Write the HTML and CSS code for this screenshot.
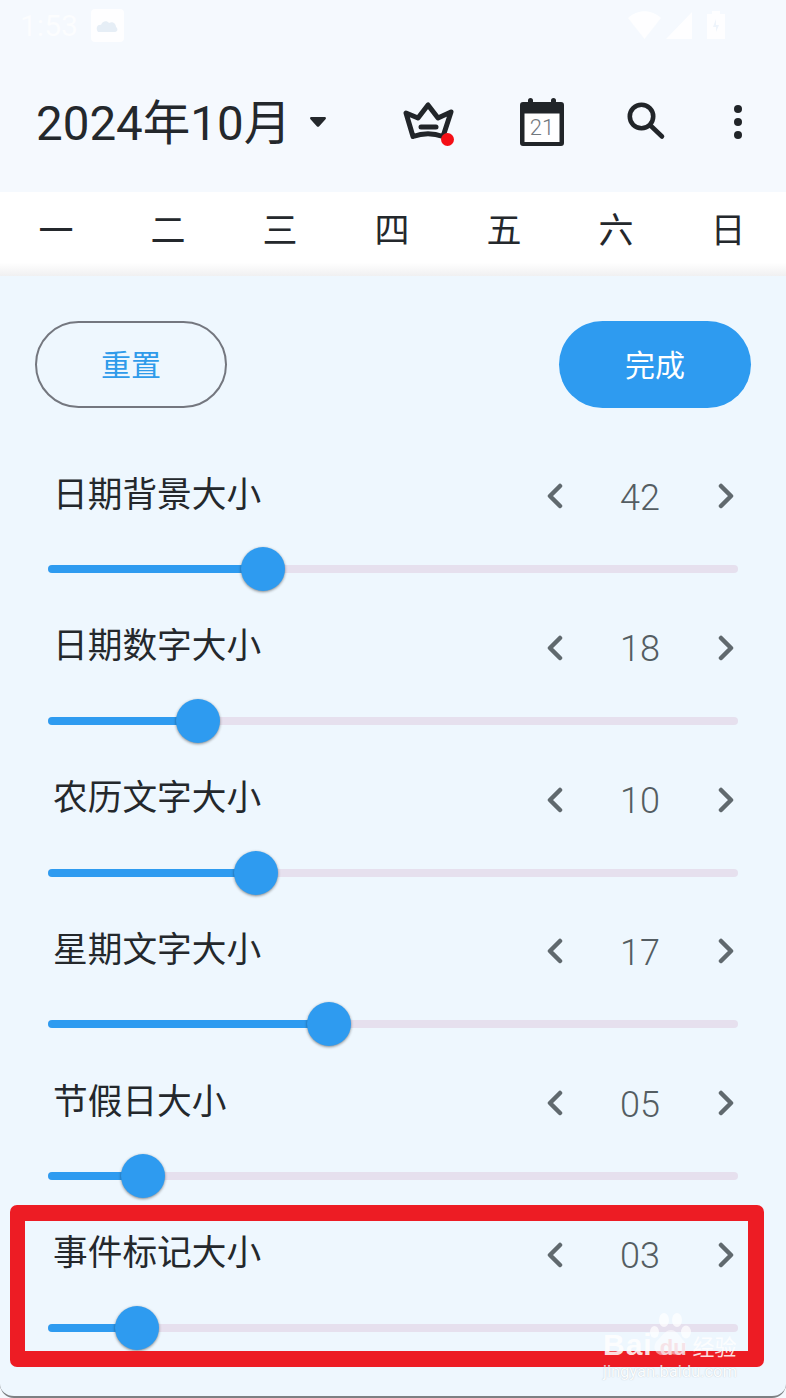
FILE: index.html
```html
<!DOCTYPE html>
<html>
  <head>
    <meta charset="UTF-8" />
    <title>日历设置</title>
    <link rel="stylesheet" href="styles.css">
  </head>
  <body>
    <div class="page">
      <div class="status-bar">
        <span class="status-time">1:53</span>
        <svg class="status-app" width="33" height="33" viewBox="0 0 33 33">
          <rect width="33" height="33" rx="4" fill="#fff" fill-opacity="0.85" />
          <path d="M7 23c-3-4 0-8 3-7 1-4 6-5 8-2 4-2 7 1 7 4 2 1 2 5-1 5z" fill="#e6eef6" />
        </svg>
        <span class="status-right">
          <svg width="33" height="28" viewBox="0 0 33 28"><path d="M0 7C9-2 24-2 33 7L16.5 28z" fill="#fff" fill-opacity="0.85" /></svg>
          <svg width="26" height="27" viewBox="0 0 26 27"><path d="M26 0V27H0z" fill="#fff" fill-opacity="0.85" /></svg>
          <svg width="18" height="28" viewBox="0 0 18 28"><path d="M5 3V0h8v3h5v25H0V3z" fill="#fff" fill-opacity="0.85" /><path d="M9 8v6h3l-3 7v-5H6z" fill="#eef4fb" /></svg>
        </span>
      </div>

      <header class="top-bar">
        <h1 class="month-title">2024年10月</h1>
        <svg class="caret" width="16" height="10" viewBox="0 0 16 10"><path d="M1.500 0h13c1.300 0 1.900 1.300 1 2.200L9.200 9.200c-.7.800-1.700.8-2.400 0L.5 2.200C-.4 1.300.2 0 1.500 0z" fill="#24282c" /></svg>
        <svg class="icon icon-crown" width="56" height="52" viewBox="0 0 56 52" fill="none" stroke="#212529" stroke-width="5" stroke-linecap="round" stroke-linejoin="round">
          <path d="M6 17 13 40.500Q28 35 43 40.500L51 16 38 22 28 9 18 22z" />
          <path d="M21 31H36" />
          <circle cx="47.500" cy="43.500" r="6.500" fill="#f40f16" stroke="none" />
        </svg>
        <span class="icon icon-calendar">
          <svg width="44" height="52" viewBox="0 0 44 52">
            <rect x="4" y="17" width="36" height="30" fill="#fff" />
            <path d="M3 6h5V4.500a2.500 2.500 0 0 1 5 0V6h18V4.500a2.500 2.500 0 0 1 5 0V6h5a3 3 0 0 1 3 3v38a3 3 0 0 1-3 3H3a3 3 0 0 1-3-3V9a3 3 0 0 1 3-3zM4.500 17.500V46H39.500V17.500z" fill="#212529" fill-rule="evenodd" />
          </svg>
          <span class="calendar-day">21</span>
        </span>
        <svg class="icon icon-search" width="42" height="52" viewBox="0 0 42 52" fill="none" stroke="#212529" stroke-width="4.600" stroke-linecap="round">
          <circle cx="17.500" cy="20.500" r="11.700" />
          <path d="M26.500 29.500 38 40.500" />
        </svg>
        <svg class="icon icon-more" width="16" height="52" viewBox="0 0 16 52" fill="#212529">
          <circle cx="8" cy="13" r="4" />
          <circle cx="8" cy="26" r="4" />
          <circle cx="8" cy="39" r="4" />
        </svg>
      </header>

      <div class="week-row">
        <span>一</span><span>二</span><span>三</span><span>四</span><span>五</span><span>六</span><span>日</span>
      </div>

      <main class="panel">
        <div class="actions">
          <button class="btn btn-reset">重置</button>
          <button class="btn btn-done">完成</button>
        </div>

        <div class="setting">
          <div class="setting-head">
            <span class="setting-name">日期背景大小</span>
            <svg class="arrow arrow-prev" width="16" height="26" viewBox="0 0 16 26"><path d="M13 3 3 13 13 23" /></svg>
            <span class="setting-value">42</span>
            <svg class="arrow arrow-next" width="16" height="26" viewBox="0 0 16 26"><path d="M3 3 13 13 3 23" /></svg>
          </div>
          <div class="slider"><div class="slider-fill" style="width: 215px"><span class="slider-thumb"></span></div></div>
        </div>

        <div class="setting">
          <div class="setting-head">
            <span class="setting-name">日期数字大小</span>
            <svg class="arrow arrow-prev" width="16" height="26" viewBox="0 0 16 26"><path d="M13 3 3 13 13 23" /></svg>
            <span class="setting-value">18</span>
            <svg class="arrow arrow-next" width="16" height="26" viewBox="0 0 16 26"><path d="M3 3 13 13 3 23" /></svg>
          </div>
          <div class="slider"><div class="slider-fill" style="width: 150px"><span class="slider-thumb"></span></div></div>
        </div>

        <div class="setting">
          <div class="setting-head">
            <span class="setting-name">农历文字大小</span>
            <svg class="arrow arrow-prev" width="16" height="26" viewBox="0 0 16 26"><path d="M13 3 3 13 13 23" /></svg>
            <span class="setting-value">10</span>
            <svg class="arrow arrow-next" width="16" height="26" viewBox="0 0 16 26"><path d="M3 3 13 13 3 23" /></svg>
          </div>
          <div class="slider"><div class="slider-fill" style="width: 208px"><span class="slider-thumb"></span></div></div>
        </div>

        <div class="setting">
          <div class="setting-head">
            <span class="setting-name">星期文字大小</span>
            <svg class="arrow arrow-prev" width="16" height="26" viewBox="0 0 16 26"><path d="M13 3 3 13 13 23" /></svg>
            <span class="setting-value">17</span>
            <svg class="arrow arrow-next" width="16" height="26" viewBox="0 0 16 26"><path d="M3 3 13 13 3 23" /></svg>
          </div>
          <div class="slider"><div class="slider-fill" style="width: 281px"><span class="slider-thumb"></span></div></div>
        </div>

        <div class="setting">
          <div class="setting-head">
            <span class="setting-name">节假日大小</span>
            <svg class="arrow arrow-prev" width="16" height="26" viewBox="0 0 16 26"><path d="M13 3 3 13 13 23" /></svg>
            <span class="setting-value">05</span>
            <svg class="arrow arrow-next" width="16" height="26" viewBox="0 0 16 26"><path d="M3 3 13 13 3 23" /></svg>
          </div>
          <div class="slider"><div class="slider-fill" style="width: 95px"><span class="slider-thumb"></span></div></div>
        </div>

        <div class="setting">
          <div class="setting-head">
            <span class="setting-name">事件标记大小</span>
            <svg class="arrow arrow-prev" width="16" height="26" viewBox="0 0 16 26"><path d="M13 3 3 13 13 23" /></svg>
            <span class="setting-value">03</span>
            <svg class="arrow arrow-next" width="16" height="26" viewBox="0 0 16 26"><path d="M3 3 13 13 3 23" /></svg>
          </div>
          <div class="slider"><div class="slider-fill" style="width: 89px"><span class="slider-thumb"></span></div></div>
        </div>
      </main>

      <!-- annotation drawn over the screenshot -->
      <div class="highlight"></div>

      <div class="watermark">
        <svg class="watermark-paw" width="42" height="43" viewBox="0 0 42 43" fill="#fff">
          <ellipse cx="4.500" cy="19" rx="4.500" ry="6" fill-opacity="0.7" />
          <ellipse cx="14" cy="7" rx="5" ry="7" fill-opacity="0.7" />
          <ellipse cx="27" cy="7" rx="5" ry="7" fill-opacity="0.7" />
          <ellipse cx="36" cy="19" rx="5" ry="6.500" fill-opacity="0.7" />
          <path d="M21 17c6 0 9 7 13 11 5 6 1 14-6 14-3 0-5-1-8-1s-5 1-8 1c-6 0-10-7-6-13 4-4 9-12 15-12z" fill-opacity="0.5" />
        </svg>
        <div class="watermark-logo"><span class="watermark-bai">Bai</span><span class="watermark-du">du</span><span class="watermark-cn">经验</span></div>
        <div class="watermark-url">jingyan.baidu.com</div>
      </div>
    </div>
  </body>
</html>
```

FILE: styles.css
```css
* {
  box-sizing: border-box;
}
body {
  margin: 0;
  font-family: Roboto, "Noto Sans CJK SC", sans-serif;
  color: #24282c;
}
.page {
  position: relative;
  width: 786px;
  height: 1398px;
  overflow: hidden;
  background: #f5f9fe;
}

/* status bar */
.status-bar {
  display: flex;
  align-items: center;
  height: 52px;
  padding: 0 61px 2px 20px;
}
.status-time {
  font-size: 30px;
  color: #fff;
  opacity: 0.7;
}
.status-app {
  margin-left: 13px;
}
.status-right {
  display: flex;
  align-items: center;
  gap: 5px;
  margin-left: auto;
}
.status-right svg:last-child {
  margin-left: 10px;
}

/* top bar */
.top-bar {
  display: flex;
  align-items: center;
  height: 140px;
  padding: 0 40px 0 36px;
}
.month-title {
  margin: 6px 0 0 0;
  font-size: 47.500px;
  font-weight: 400;
  line-height: 1;
}
.caret {
  margin-left: 19px;
}
.icon-crown {
  margin-left: auto;
}
.icon-calendar {
  position: relative;
  display: block;
  width: 44px;
  height: 52px;
  margin-left: 64px;
}
.icon-calendar svg {
  display: block;
}
.calendar-day {
  position: absolute;
  left: 0;
  right: 0;
  top: 19px;
  font-size: 22px;
  font-weight: 300;
  line-height: 26px;
  text-align: center;
  color: #72787e;
}
.icon-search {
  margin-left: 60px;
}
.icon-more {
  margin-left: 64px;
}

/* weekdays */
.week-row {
  display: grid;
  grid-template-columns: repeat(7, 112px);
  height: 84px;
  padding-bottom: 14px;
  align-items: center;
  background: linear-gradient(#fff 84%, #f0f0f1 100%);
  font-size: 35px;
  text-align: center;
}

/* settings panel */
.panel {
  height: 1122px;
  padding-top: 45px;
  background: #eef7fe;
  border-bottom: 2px solid #7d8083;
  border-radius: 0 0 14px 14px;
}
.actions {
  display: flex;
  justify-content: space-between;
  padding: 0 35px;
  margin-bottom: 63px;
}
.btn {
  width: 192px;
  height: 87px;
  border-radius: 44px;
  font-family: inherit;
  font-size: 30px;
  padding: 0 0 4px 0;
}
.btn-reset {
  background: transparent;
  border: 2px solid #74777f;
  color: #2f9bea;
}
.btn-done {
  background: #2e9bf0;
  border: none;
  color: #fff;
}
.setting {
  height: 151.800px;
  padding: 0 48px;
}
.setting-head {
  display: flex;
  align-items: center;
  height: 48px;
  padding-left: 5px;
}
.setting-name {
  margin-bottom: 7px;
  font-size: 34.700px;
  color: #24282c;
}
.setting-value {
  width: 76px;
  margin-top: 5px;
  font-size: 36px;
  font-weight: 300;
  text-align: center;
  color: #545d62;
}
.arrow {
  margin-top: 2px;
  fill: none;
  stroke: #60696e;
  stroke-width: 4.500;
  stroke-linecap: round;
  stroke-linejoin: round;
}
.arrow-prev {
  margin-left: auto;
  margin-right: 39px;
}
.arrow-next {
  margin-left: 40px;
  margin-right: 4px;
}
.slider {
  position: relative;
  height: 8px;
  margin-top: 46px;
  border-radius: 4px;
  background: #e6e0ee;
}
.slider-fill {
  position: relative;
  height: 8px;
  border-radius: 4px;
  background: #2e9bf0;
}
.slider-thumb {
  position: absolute;
  right: -22px;
  top: -18px;
  width: 44px;
  height: 44px;
  border-radius: 50%;
  background: #2e9bf0;
  box-shadow: 0 1px 3px rgba(0, 0, 0, 0.45);
}

/* red box and watermark on top of the screenshot */
.highlight {
  position: absolute;
  left: 10px;
  top: 1205px;
  width: 754px;
  height: 162px;
  border: 16px solid #ed1c24;
  border-width: 16px 16px 16px 15px;
  border-radius: 7px;
}
.watermark {
  position: absolute;
  left: 603px;
  top: 1313px;
  width: 140px;
  color: #fff;
}
.watermark-paw {
  position: absolute;
  left: 47px;
  top: 0;
}
.watermark-logo {
  display: flex;
  align-items: baseline;
  position: absolute;
  left: 0;
  top: 17px;
  line-height: 30px;
  white-space: nowrap;
  opacity: 0.85;
}
.watermark-bai {
  font-family: "Liberation Sans", sans-serif;
  font-size: 30px;
  font-weight: 700;
  letter-spacing: 1px;
}
.watermark-du {
  margin-left: 7px;
  font-family: "Liberation Sans", sans-serif;
  font-size: 22px;
  font-weight: 700;
  color: #f6dfe4;
}
.watermark-cn {
  margin-left: 6px;
  font-size: 22px;
}
.watermark-url {
  position: absolute;
  left: 0;
  top: 50px;
  font-size: 16.500px;
  line-height: 18px;
  white-space: nowrap;
  opacity: 0.8;
  text-shadow: 0 0 1px rgba(110, 120, 130, 0.5);
}
```
